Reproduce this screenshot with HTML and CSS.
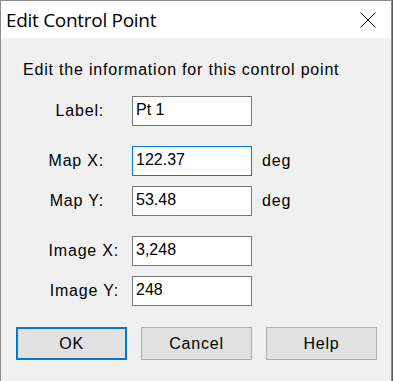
FILE: index.html
```html
<!DOCTYPE html>
<html lang="en">
<head>
    <meta charset="UTF-8">
    <meta name="viewport" content="width=device-width, initial-scale=1.0">
    <title>Edit Control Point</title>
    <link rel="stylesheet" href="styles.css">
</head>
<body>
    <div class="window">
        <!-- Title bar -->
        <div class="titlebar">
            <span class="title">Edit Control Point</span>
            <svg class="close" width="16" height="16" viewBox="0 0 16 16">
                <path d="M0.5 0.5 L15.5 15.5 M15.5 0.5 L0.5 15.5" stroke="#000" stroke-width="1" fill="none"/>
            </svg>
        </div>

        <!-- Dialog body -->
        <div class="content">
            <p class="intro">Edit the information for this control point</p>

            <div class="group group-label">
                <div class="row">
                    <label>Label:</label>
                    <input type="text" value="Pt 1">
                </div>
            </div>

            <div class="group group-map">
                <div class="row">
                    <label>Map X:</label>
                    <input type="text" class="focused" value="122.37">
                    <span class="unit">deg</span>
                </div>
                <div class="row">
                    <label>Map Y:</label>
                    <input type="text" value="53.48">
                    <span class="unit">deg</span>
                </div>
            </div>

            <div class="group group-image">
                <div class="row">
                    <label>Image X:</label>
                    <input type="text" value="3,248">
                </div>
                <div class="row">
                    <label>Image Y:</label>
                    <input type="text" value="248">
                </div>
            </div>

            <div class="buttons">
                <button class="default">OK</button>
                <button>Cancel</button>
                <button>Help</button>
            </div>
        </div>
    </div>
</body>
</html>
```

FILE: styles.css
```css
/* General Reset */
* {
    margin: 0;
    padding: 0;
    box-sizing: border-box;
}

body {
    background-color: #5a5a66;
    font-family: "Liberation Sans", Arial, sans-serif;
    color: #000;
    overflow: hidden;
}

/* Window frame */
.window {
    width: 392px;
    height: 400px;
    background-color: #f0f0f0;
    border: 1px solid #8a8a8a;
}

/* Title bar */
.titlebar {
    height: 37px;
    background-color: #fff;
    display: flex;
    align-items: center;
    justify-content: space-between;
    padding-left: 5px;
    padding-right: 15px;
}

.title {
    font-family: "Open Sans", sans-serif;
    font-size: 19px;
    line-height: 24px;
    letter-spacing: -0.3px;
}

.close {
    display: block;
}

/* Body */
.content {
    padding-top: 23px;
    font-size: 16px;
    line-height: 18px;
    letter-spacing: 0.8px;
}

.intro {
    padding-left: 22px;
}

.group {
    display: flex;
    flex-direction: column;
    gap: 10px;
    margin-top: 20px;
}

.group-label {
    margin-top: 17px;
}

.row {
    display: flex;
    align-items: center;
    height: 30px;
}

.row label {
    width: 131px;
    text-align: right;
    padding-right: 28px;
}

.group-image .row label {
    padding-right: 13px;
}

.row input {
    width: 120px;
    height: 30px;
    padding: 4px 3px 6px;
    border: 1px solid #7a7a7a;
    background: #fff;
    font-family: "Liberation Sans", Arial, sans-serif;
    font-size: 16px;
    line-height: 18px;
    letter-spacing: 0;
    color: #000;
    outline: none;
}

.row input.focused {
    border-color: #0078d7;
}

.unit {
    margin-left: 10px;
}

/* Buttons */
.buttons {
    display: flex;
    gap: 14px;
    margin-top: 21px;
    padding-left: 15px;
}

.buttons button {
    width: 111px;
    height: 33px;
    background-color: #e1e1e1;
    border: 1px solid #adadad;
    font-family: "Liberation Sans", Arial, sans-serif;
    font-size: 16px;
    letter-spacing: 0.8px;
    color: #000;
}

.buttons button.default {
    border: 2px solid #0078d7;
}
```
